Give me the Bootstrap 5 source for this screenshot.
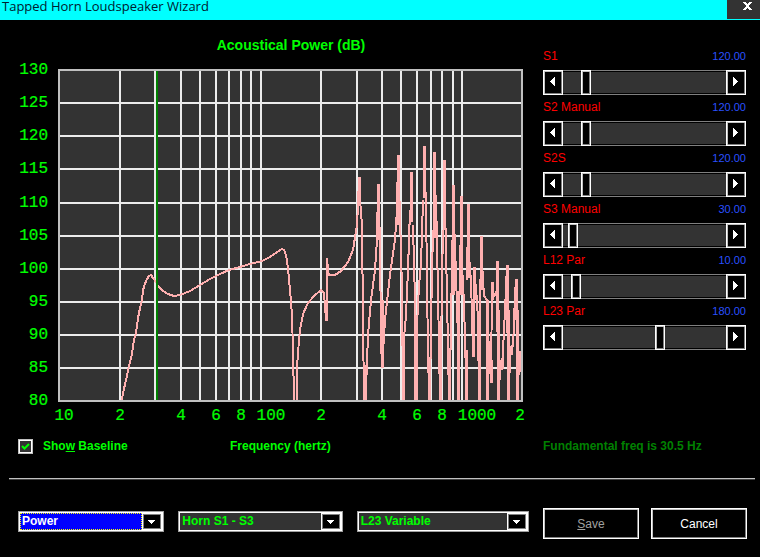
<!DOCTYPE html>
<html lang="en">
<head>
<meta charset="utf-8">
<meta name="viewport" content="width=device-width, initial-scale=1">
<title>Tapped Horn Loudspeaker Wizard</title>
<link href="https://cdn.jsdelivr.net/npm/bootstrap@5.3.0/dist/css/bootstrap.min.css" rel="stylesheet">
<style>
body { background: #000; color: #0f0; font: 12px/16px "Liberation Sans", Arial, sans-serif; }
.title-bar { background: #0ff; height: 20px; }
.title-bar h1 { font: 13px/18px "Open Sans", "Noto Sans", sans-serif; color: #002030; margin: -3px 0 0 2px; }
.close-btn { width: 33px; height: 19px; background: #333; border: 0; padding: 0 0 8px 7px; line-height: 0; }
.wizard-main { display: grid; grid-template-columns: minmax(0, 1fr) 203px; padding: 14px 14px 0 0; }
.chart { display: block; width: 100%; height: auto; }
.chart text { fill: #0f0; }
.tick-labels { font: 16px "Liberation Mono", monospace; stroke: #0f0; stroke-width: .2px; }
.chart-title { font: bold 14px "Liberation Sans", sans-serif; }
.sliders { padding-top: 10px; }
.slider-head { height: 26px; line-height: 24px; }
.slider-head label { color: #f00; }
.slider-head output { color: #2a50ff; font-size: 11px; }
.scroll-row { height: 25px; margin: 0; }
.step-btn { width: 20px; background: #000; border: 1px solid #fff; box-shadow: inset 1px 1px #c0c0c0, inset -1px -1px #808080; padding: 0 2px 2px 0; flex: none; display: flex; align-items: center; justify-content: center; }
.track { appearance: none; -webkit-appearance: none; flex: 1 1 0; min-width: 0; height: 25px; margin: 0; background: #333; border: solid #808080; border-width: 1px 0; box-shadow: inset 0 1px #000, inset 0 -1px #000; }
.track::-webkit-slider-runnable-track { height: 25px; margin: -1px 0; }
.track::-webkit-slider-thumb { -webkit-appearance: none; width: 10px; height: 25px; border: 1px solid #fff; border-radius: 0; background: #000; box-shadow: inset 1px 1px #c0c0c0, inset -1px -1px #808080; }
.strong-text { font-weight: bold; }
.status-row { display: grid; grid-template-columns: 212px minmax(0, 1fr) 203px; padding: 12px 14px 0 18px; }
.baseline-check { appearance: none; -webkit-appearance: none; width: 15px; height: 15px; margin: 0; background: #333; border: 1px solid #c0c0c0; outline: 0; box-shadow: inset 0 0 0 1px #fff; display: block; }
.check-wrap svg { position: absolute; left: 3px; top: 3px; pointer-events: none; visibility: hidden; }
.baseline-check:checked + svg { visibility: visible; }
.baseline-label { margin-left: 10px; }
.fund { color: #008000; }
.divider { margin: 24px 5px 0 9px; border: 0; border-top: 1px solid #c0c0c0; border-bottom: 1px solid #404040; opacity: 1; }
.wizard-foot { display: grid; grid-template-columns: 146fr 164fr 172fr 204px; gap: 14px; padding: 28px 13px 16px 18px; align-items: start; }
.combo { margin-top: 3px; }
.combo select { appearance: none; -webkit-appearance: none; width: 100%; height: 21px; display: block; background: #333; color: #0f0; font: bold 12px/15px "Liberation Sans", sans-serif; border: 1px solid #a0a0a0; border-radius: 0; box-shadow: inset 0 0 0 1px #fff; padding: 0 22px 0 3px; outline: 0; }
.combo .face { position: absolute; right: 1px; top: 1px; width: 21px; height: 19px; pointer-events: none; }
.combo .selected { background: #00f; color: #fff; }
.combo .focus-frame { position: absolute; inset: 2px 22px 2px 2px; border: 1px dotted #ff0; pointer-events: none; }
.commands { gap: 12px; }
.cmd-btn { flex: 1 1 0; height: 31px; background: #000; color: #fff; border: 1px solid #fff; border-radius: 0; box-shadow: inset 1px 1px #c0c0c0, inset -1px -1px #808080; padding: 0; font-size: 12px; }
.cmd-btn:disabled { color: #a0a0a0; }
</style>
</head>
<body>
<header class="title-bar d-flex justify-content-between">
  <h1>Tapped Horn Loudspeaker Wizard</h1>
  <button class="close-btn" type="button" aria-label="Close"><svg width="9" height="8" viewBox="0 0 9 8" shape-rendering="crispEdges"><path d="M0 0h3v1h1v1h1v-1h1v-1h3v1h-1v1h-1v1h-1v2h1v1h1v1h1v1h-3v-1h-1v-1h-1v1h-1v1h-3v-1h1v-1h1v-1h1v-2h-1v-1h-1v-1h-1z" fill="#fff"/></svg></button>
</header>
<main>
  <div class="wizard-main">
    <svg class="chart" viewBox="0 34 543 392" role="img" aria-label="Acoustical power in dB against frequency in hertz">
      <text class="chart-title" x="291" y="50" text-anchor="middle">Acoustical Power (dB)</text>
      <rect x="58" y="69" width="465" height="333" fill="#333"/>
      <g stroke="#ececec" stroke-width="2" shape-rendering="crispEdges" fill="none">
        <path d="M120 70V401M155 70V401M181 70V401M200 70V401M216 70V401M229 70V401M241 70V401M251 70V401M261 70V401M321 70V401M357 70V401M382 70V401M401 70V401M417 70V401M431 70V401M442 70V401M453 70V401M462 70V401"/>
        <path d="M59 103H522M59 136H522M59 169H522M59 203H522M59 236H522M59 269H522M59 302H522M59 335H522M59 368H522"/>
      </g>
      <g fill="none" stroke="#ffb0b0" shape-rendering="crispEdges" stroke-linejoin="bevel">
        <path stroke-width="2" d="M122 400L123 393 126 380 129 366 132 354 134 340 136 333 138 318 140 308 142 300 143 291 144 286 147 279 149 276 151 275 153 278 156 282 158 286 163 291 168 294 174 296 180 295 190 291 200 285 210 279 220 274 229 270 240 267 250 264 262 261 270 257 277 252 282 249 284 250 286 255 288 268 290 290 292 315 293 350 294 400M297 400L297 367 299 340 300 330 303 314 308 303 314 296 321 290 324 293 326 320 327 320 327 258 328 270 329 275 335 275 341 271 348 262 353 250 357 225 358 205 359 177 360 200 362 225 363 320 364 400 366 390 368 335 371 300 375 270 377 240 378 185 380 240 381 340 382 368 385 320 390 275 395 240 397 210 398 155"/>
        <path stroke-width="2" d="M398 155L400 215 402 290 403 400M404 338L406 315 408 270 410 210M413 225L415 300 415 400M417 400L417 325 419 285 421 265 423 200M426 192L427 290 429 400M430 400L431 322 433 230M436 195L438 293 440 400M441 354L442 280 443 230M445 204L447 296 449 400M451 350L452 240M454 220L456 275 458 338 459 400M459 340L460 245M462 265L464 303 466 375 466 400M467 280L468 215M470 262L472 310 473 357M474 268L477 300 478 321 479 400M480 320L481 240M482 262L484 296 487 300 488 400M489 341L490 364 491 383 492 283 494 297 497 290 497 262 498 400 501 360 502 370 505 310 507 265 508 400 511 346 513 347 515 296 516 279 518 400 519 352 521 354 521 372"/>
        <path stroke-width="3" d="M359.500 177V200M378.500 184V240M398.500 155V225M365 365V400M382.500 300V368M403.500 335V400M411.500 172V222M415 370V400M424.500 146V198M429.500 357V400M434.500 152V238M440 353V400M444.500 160V230M449.500 348V400M453.500 185V295M458.500 295V400M461.500 196V295M466 350V400M468.500 204V278M474.500 267V300M473.500 300V357M479.500 320V400M481.500 236V290M487.500 300V400M489.500 341V365M491.500 360V383M492.500 282V300M497.500 261V310M498.500 310V400M507.500 265V310M508.500 310V400M516.500 279V320M517.500 310V400M519.500 351V365M511.500 346V355M502.500 358V369"/>
      </g>
      <path d="M157 70V401" stroke="#008000" stroke-width="2" shape-rendering="crispEdges"/>
      <rect x="59" y="70" width="463" height="331" fill="none" stroke="#c0c0c0" stroke-width="2" shape-rendering="crispEdges"/>
      <g class="tick-labels">
        <g text-anchor="end"><text x="48" y="74">130</text><text x="48" y="107">125</text><text x="48" y="140">120</text><text x="48" y="173">115</text><text x="48" y="207">110</text><text x="48" y="240">105</text><text x="48" y="273">100</text><text x="48" y="306">95</text><text x="48" y="339">90</text><text x="48" y="372">85</text><text x="48" y="405">80</text></g>
        <g text-anchor="middle"><text x="64" y="420">10</text><text x="120" y="420">2</text><text x="181" y="420">4</text><text x="216" y="420">6</text><text x="241" y="420">8</text><text x="271" y="420">100</text><text x="321" y="420">2</text><text x="382" y="420">4</text><text x="417" y="420">6</text><text x="442" y="420">8</text><text x="477" y="420">1000</text><text x="520" y="420">2</text></g>
      </g>
    </svg>
    <section class="sliders" id="sliders" aria-label="Parameters"></section>
  </div>
  <div class="status-row strong-text">
    <div class="d-flex align-items-center">
      <span class="check-wrap position-relative"><input class="baseline-check" type="checkbox" id="baseline" checked><svg width="9" height="9" viewBox="0 0 9 9"><path d="M1 4L3.500 6.500 8 2" stroke="#0f0" stroke-width="2" fill="none"/></svg></span>
      <label class="baseline-label" for="baseline">Sho<u>w</u> Baseline</label>
    </div>
    <div>Frequency (hertz)</div>
    <div class="fund">Fundamental freq is 30.5 Hz</div>
  </div>
  <hr class="divider">
  <div class="wizard-foot">
    <div class="combo position-relative"><select class="selected" aria-label="Chart"><option>Power</option></select><span class="focus-frame"></span><svg class="face" viewBox="0 0 21 19" shape-rendering="crispEdges"><path d="M0 0h21v19h-21z" fill="#fff"/><path d="M1 2h18v15h-18z" fill="#808080"/><path d="M2 3h16v13h-16z" fill="#000"/><path d="M6 8h7v1h-1v1h-1v1h-1v1h-1v-1h-1v-1h-1v-1h-1z" fill="#fff"/></svg></div>
    <div class="combo position-relative"><select aria-label="Segment"><option>Horn S1 - S3</option></select><svg class="face" viewBox="0 0 21 19" shape-rendering="crispEdges"><path d="M0 0h21v19h-21z" fill="#fff"/><path d="M1 2h18v15h-18z" fill="#808080"/><path d="M2 3h16v13h-16z" fill="#000"/><path d="M6 8h7v1h-1v1h-1v1h-1v1h-1v-1h-1v-1h-1v-1h-1z" fill="#fff"/></svg></div>
    <div class="combo position-relative"><select aria-label="Variable"><option>L23 Variable</option></select><svg class="face" viewBox="0 0 21 19" shape-rendering="crispEdges"><path d="M0 0h21v19h-21z" fill="#fff"/><path d="M1 2h18v15h-18z" fill="#808080"/><path d="M2 3h16v13h-16z" fill="#000"/><path d="M6 8h7v1h-1v1h-1v1h-1v1h-1v-1h-1v-1h-1v-1h-1z" fill="#fff"/></svg></div>
    <div class="commands d-flex"><button class="cmd-btn" type="button" disabled><u>S</u>ave</button><button class="cmd-btn" type="button">Cancel</button></div>
  </div>
</main>
<script src="https://cdn.jsdelivr.net/npm/bootstrap@5.3.0/dist/js/bootstrap.bundle.min.js"></script>
<script>
const params = [["S1", 120, 1000], ["S2 Manual", 120, 1000], ["S2S", 120, 1000], ["S3 Manual", 30, 1000], ["L12 Par", 10, 200], ["L23 Par", 180, 300]];
const arrow = d => `<svg width="5" height="9" viewBox="0 0 5 9" shape-rendering="crispEdges"><path fill="#fff" d="${d}"/></svg>`;
const left = arrow("M5 0v9h-1v-1h-1v-1h-1v-1h-1v-1h-1v-1h1v-1h1v-1h1v-1h1v-1z");
const right = arrow("M0 0v9h1v-1h1v-1h1v-1h1v-1h1v-1h-1v-1h-1v-1h-1v-1h-1v-1z");
document.getElementById("sliders").innerHTML = params.map(([name, value, max], i) => `
  <div class="slider-head d-flex justify-content-between"><label for="p${i}">${name}</label><output for="p${i}">${value.toFixed(2)}</output></div>
  <div class="scroll-row d-flex"><button class="step-btn" type="button" data-step="-1" aria-label="Decrease ${name}">${left}</button><input class="track" type="range" id="p${i}" min="0" max="${max}" value="${value}"><button class="step-btn" type="button" data-step="1" aria-label="Increase ${name}">${right}</button></div>`).join("");
document.querySelectorAll(".scroll-row").forEach(row => {
  const input = row.querySelector("input");
  const show = () => { row.previousElementSibling.querySelector("output").textContent = Number(input.value).toFixed(2); };
  input.addEventListener("input", show);
  row.querySelectorAll("button").forEach(b => b.addEventListener("click", () => { input.value = Number(input.value) + Number(b.dataset.step); show(); }));
});
</script>
</body>
</html>
